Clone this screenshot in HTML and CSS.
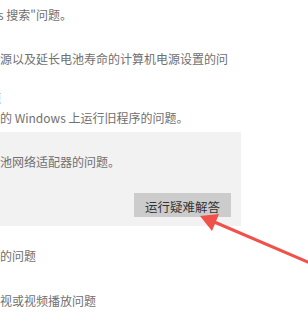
FILE: index.html
```html
<!DOCTYPE html>
<html lang="zh-CN">
<head>
<meta charset="utf-8">
<link rel="stylesheet" href="styles.css">
</head>
<body>
<div class="page">
  <p class="line l1"><span class="cut1">s</span> 搜索"问题。</p>
  <p class="line l2">源以及延长电池寿命的计算机电源设置的问</p>
  <p class="line l3"><span class="cut3">题</span></p>
  <p class="line l4">的 Windows 上运行旧程序的问题。</p>
  <div class="box">
    <p class="line">池网络适配器的问题。</p>
    <div class="actions"><button class="btn">运行疑难解答</button></div>
  </div>
  <p class="line l5">的问题</p>
  <p class="line l6">视或视频播放问题</p>
  <svg class="arrow" width="308" height="323" viewBox="0 0 308 323">
    <line x1="310" y1="263" x2="212" y2="221" stroke="#f0514b" stroke-width="3" stroke-linecap="round"/>
    <polygon points="200,216 219,214 212,231" fill="#f0514b"/>
  </svg>
</div>
</body>
</html>
```
FILE: styles.css
```css
html, body {
  margin: 0;
  padding: 0;
  background: #ffffff;
}
.page {
  position: relative;
  width: 308px;
  height: 323px;
  overflow: hidden;
  font-family: "Noto Sans CJK SC", "Noto Sans", sans-serif;
  font-size: 12px;
  color: #707070;
}
.line {
  margin: 0;
  line-height: 16px;
  white-space: nowrap;
}
.l1 { padding-top: 7px; }
.cut1 { margin-left: -2px; }
.l2 { margin-top: 28px; }
.l3 { margin-top: 23px; height: 16px; overflow: hidden; }
.cut3 { display: inline-block; margin-left: -11px; }
.l4 { margin-top: 4px; }
.box {
  margin-top: 6px;
  width: 231px;
  padding: 22px 10px 9px 0;
  background: #f2f2f2;
}
.actions {
  display: flex;
  justify-content: flex-end;
  margin-top: 23px;
}
.btn {
  width: 97px;
  height: 24px;
  border: 0;
  padding: 0;
  background: #cccccc;
  color: #333333;
  font-family: "Noto Sans CJK SC", sans-serif;
  font-size: 12.5px;
  line-height: 24px;
  padding-top: 2px;
}
.l5 { margin-top: 22px; }
.l6 { margin-top: 29px; }
.arrow {
  position: absolute;
  left: 0;
  top: 0;
}
```
